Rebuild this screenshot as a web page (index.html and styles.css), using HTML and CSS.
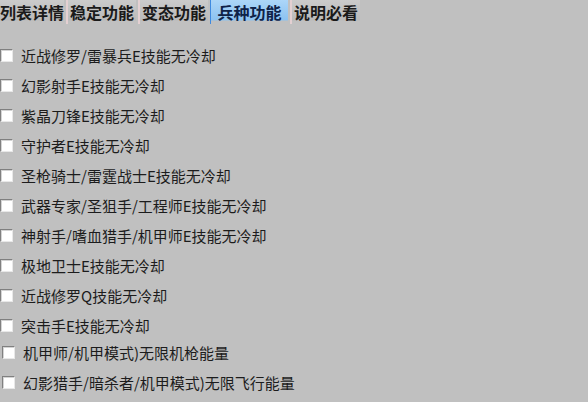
FILE: index.html
```html
<!DOCTYPE html>
<html lang="zh-CN">
  <head>
    <meta charset="UTF-8" />
    <title>兵种功能</title>
    <link rel="stylesheet" href="styles.css">
  </head>
  <body>
    <div class="tabs">
      <div class="tab first">列表详情</div>
      <div class="tab">稳定功能</div>
      <div class="tab">变态功能</div>
      <div class="tab active">兵种功能</div>
      <div class="tab">说明必看</div>
    </div>
    <div class="options">
      <label class="option"><span class="box"></span>近战修罗/雷暴兵E技能无冷却</label>
      <label class="option"><span class="box"></span>幻影射手E技能无冷却</label>
      <label class="option"><span class="box"></span>紫晶刀锋E技能无冷却</label>
      <label class="option"><span class="box"></span>守护者E技能无冷却</label>
      <label class="option"><span class="box"></span>圣枪骑士/雷霆战士E技能无冷却</label>
      <label class="option"><span class="box"></span>武器专家/圣狙手/工程师E技能无冷却</label>
      <label class="option"><span class="box"></span>神射手/嗜血猎手/机甲师E技能无冷却</label>
      <label class="option"><span class="box"></span>极地卫士E技能无冷却</label>
      <label class="option"><span class="box"></span>近战修罗Q技能无冷却</label>
      <label class="option"><span class="box"></span>突击手E技能无冷却</label>
      <label class="option shifted tight"><span class="box"></span>机甲师/机甲模式)无限机枪能量</label>
      <label class="option shifted"><span class="box"></span>幻影猎手/暗杀者/机甲模式)无限飞行能量</label>
    </div>
  </body>
</html>
```

FILE: styles.css
```css
body {
  margin: 0;
  background-color: #c0c0c0;
  font-family: "Noto Sans CJK SC", "Liberation Sans", sans-serif;
  color: #1c1c1c;
  overflow: hidden;
}

/* tab strip */
.tabs {
  display: flex;
  align-items: stretch;
}

.tab {
  display: flex;
  align-items: flex-start;
  justify-content: center;
  width: 70px;
  height: 24px;
  margin-right: 2px;
  background: linear-gradient(#cbcbcb 0, #bababa 20px, #c0c0c0 21px);
  border-left: 2px solid #e4d0d2;
  font-size: 16px;
  font-weight: bold;
  color: #1a1a1a;
  box-sizing: border-box;
  white-space: nowrap;
}

.tab.first {
  width: 64px;
  border-left: none;
  justify-content: flex-start;
}

.tab.active {
  width: 78px;
  background: linear-gradient(#acd6f8 0, #8cc2f0 20px, #c0c0c0 21px);
  border-left: 1px solid #3f8ae0;
  color: #0e2248;
}

/* checkbox list */
.options {
  display: flex;
  flex-direction: column;
  padding-top: 16px;
}

.option {
  display: flex;
  align-items: center;
  height: 30px;
  font-size: 15px;
  line-height: 1;
}

.option.tight {
  margin-top: -3px;
}

.option.shifted {
  padding-left: 2px;
}

.box {
  width: 13px;
  height: 13px;
  margin-right: 8px;
  background-color: #fff;
  border-top: 1px solid #808080;
  border-left: 1px solid #808080;
  border-right: 1px solid #e8e8e8;
  border-bottom: 1px solid #e8e8e8;
  box-shadow: inset 1px 1px 0 #d4d4d4;
  box-sizing: border-box;
  flex-shrink: 0;
}
```
